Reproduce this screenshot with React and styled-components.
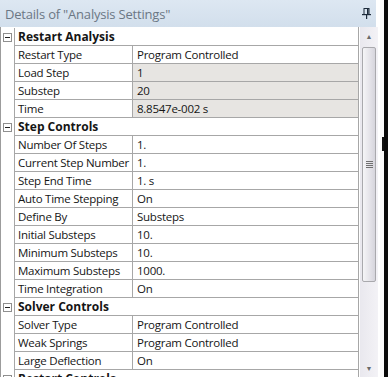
import React from 'react';
import styled, { createGlobalStyle } from 'styled-components';

const GlobalStyle = createGlobalStyle`
  html, body {
    margin: 0;
    padding: 0;
    background: #ffffff;
    overflow: hidden;
  }
  body {
    font-family: "Open Sans", "Noto Sans", "Liberation Sans", sans-serif;
  }
`;

const Screen = styled.div`
  display: flex;
  width: 388px;
  height: 377px;
  overflow: hidden;
`;

const Panel = styled.div`
  display: flex;
  flex-direction: column;
  width: 380px;
  height: 377px;
  background: #ffffff;
`;

const Gutter = styled.div`
  position: relative;
  width: 4px;
  background: #fafafa;
`;

const Edge = styled.div`
  width: 4px;
  background: #0a0a0a;
`;

const Cursor = styled.div`
  position: absolute;
  left: 2px;
  top: 137px;
  width: 2px;
  height: 14px;
  background: #111;
`;

const TitleBar = styled.div`
  display: flex;
  align-items: center;
  justify-content: space-between;
  height: 27px;
  padding: 0 5px 0 5px;
  background: linear-gradient(#dde7f2, #d2dfec);
  color: #6b7784;
  font-size: 13px;
  letter-spacing: -0.2px;
  box-sizing: border-box;
  width: 376px;
`;

const Body = styled.div`
  display: flex;
  flex: 1;
  min-height: 0;
  border-left: 1px solid #9c9c9c;
`;

const Grid = styled.div`
  width: 357px;
  border-right: 1px solid #a7a7a7;
  overflow: hidden;
  padding-top: 1px;
`;

const Row = styled.div`
  display: grid;
  grid-template-columns: 14px 118px 1fr;
  height: 18px;
`;

const BoxCell = styled.div`
  display: flex;
  align-items: center;
  justify-content: center;
  border-right: 1px solid #a7a7a7;
`;

const Toggle = styled.div`
  position: relative;
  width: 7px;
  height: 7px;
  border: 1px solid #8f8f8f;
  background: #fff;
  &::after {
    content: '';
    position: absolute;
    left: 1px;
    top: 3px;
    width: 5px;
    height: 1px;
    background: #222;
  }
`;

const Cell = styled.div`
  display: flex;
  align-items: center;
  padding-left: ${p => (p.$value ? 4 : 3)}px;
  border-bottom: 1px solid #a7a7a7;
  border-right: ${p => (p.$value ? 'none' : '1px solid #a7a7a7')};
  background: ${p => (p.$readonly ? '#e7e5e2' : '#ffffff')};
  font-size: 11.5px;
  letter-spacing: -0.25px;
  color: #151515;
  white-space: nowrap;
  overflow: hidden;
`;

const GroupCell = styled(Cell)`
  grid-column: span 2;
  border-right: none;
  font-size: 12px;
  letter-spacing: 0;
  font-weight: 700;
`;

const Scrollbar = styled.div`
  display: flex;
  flex-direction: column;
  width: 18px;
  margin-left: 1px;
  background: linear-gradient(90deg, #e9e8ee, #f3f2f6);
`;

const Arrow = styled.div`
  display: flex;
  align-items: center;
  justify-content: center;
  height: 18px;
  color: #6a6a6a;
  font-size: 7px;
`;

const Track = styled.div`
  flex: 1;
  padding: 2px 2px 0 2px;
`;

const Thumb = styled.div`
  display: flex;
  align-items: center;
  justify-content: center;
  height: 235px;
  border: 1px solid #a9a9ad;
  border-radius: 2px;
  background: linear-gradient(90deg, #f5f5f7, #e3e2e8 60%, #d6d5dc);
  box-sizing: border-box;
`;

const Grip = styled.div`
  width: 7px;
  height: 7px;
  background: repeating-linear-gradient(#707070 0 1px, transparent 1px 2px);
`;

const PinIcon = () => (
  <svg width="9" height="11" viewBox="0 0 9 11">
    <rect x="2" y="0.5" width="5" height="6" fill="none" stroke="#1c2a3a" />
    <rect x="5" y="1" width="1.5" height="5" fill="#1c2a3a" />
    <rect x="0" y="6" width="9" height="1.2" fill="#1c2a3a" />
    <rect x="4" y="7" width="1.2" height="4" fill="#1c2a3a" />
  </svg>
);

const groups = [
  {
    title: 'Restart Analysis',
    rows: [
      ['Restart Type', 'Program Controlled'],
      ['Load Step', '1', true],
      ['Substep', '20', true],
      ['Time', '8.8547e-002 s', true],
    ],
  },
  {
    title: 'Step Controls',
    rows: [
      ['Number Of Steps', '1.'],
      ['Current Step Number', '1.'],
      ['Step End Time', '1. s'],
      ['Auto Time Stepping', 'On'],
      ['Define By', 'Substeps'],
      ['Initial Substeps', '10.'],
      ['Minimum Substeps', '10.'],
      ['Maximum Substeps', '1000.'],
      ['Time Integration', 'On'],
    ],
  },
  {
    title: 'Solver Controls',
    rows: [
      ['Solver Type', 'Program Controlled'],
      ['Weak Springs', 'Program Controlled'],
      ['Large Deflection', 'On'],
    ],
  },
  { title: 'Restart Controls', rows: [] },
];

export default function App() {
  return (
    <>
      <GlobalStyle />
      <Screen>
        <Panel>
          <TitleBar>
            <span>Details of "Analysis Settings"</span>
            <PinIcon />
          </TitleBar>
          <Body>
            <Grid>
              {groups.map(g => (
                <React.Fragment key={g.title}>
                  <Row>
                    <BoxCell>
                      <Toggle />
                    </BoxCell>
                    <GroupCell>{g.title}</GroupCell>
                  </Row>
                  {g.rows.map(([name, value, ro]) => (
                    <Row key={name}>
                      <BoxCell />
                      <Cell>{name}</Cell>
                      <Cell $value $readonly={ro}>{value}</Cell>
                    </Row>
                  ))}
                </React.Fragment>
              ))}
            </Grid>
            <Scrollbar>
              <Arrow>▲</Arrow>
              <Track>
                <Thumb>
                  <Grip />
                </Thumb>
              </Track>
              <Arrow>▼</Arrow>
            </Scrollbar>
          </Body>
        </Panel>
        <Gutter>
          <Cursor />
        </Gutter>
        <Edge />
      </Screen>
    </>
  );
}
